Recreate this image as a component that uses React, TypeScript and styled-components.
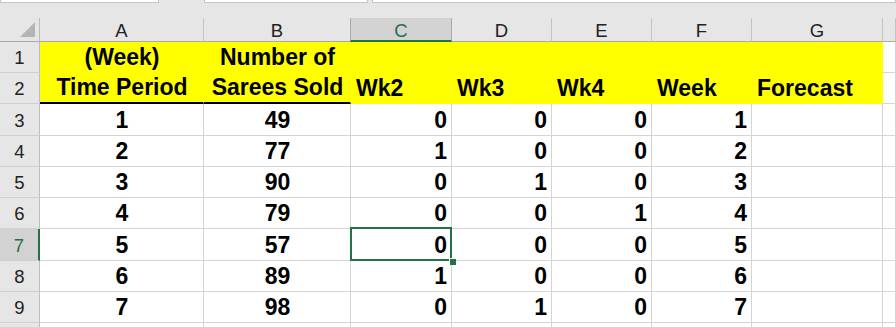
import React from 'react'
import styled, { createGlobalStyle, css } from 'styled-components'

const GlobalStyle = createGlobalStyle`
  html, body {
    margin: 0;
    padding: 0;
    background: #ffffff;
  }
  body {
    font-family: "Liberation Sans", Arial, sans-serif;
  }
`

const GREEN = '#217346'
const GRID = '#d4d4d4'
const YELLOW = '#ffff00'

const Page = styled.div`
  width: 896px;
  height: 327px;
  overflow: hidden;
  background: #e6e6e6;
`

const Toolbar = styled.div`
  height: 18px;
  display: flex;
  align-items: flex-start;
  background: #e6e6e6;
`

const ToolBox = styled.div<{ $w?: number; $ml?: number }>`
  box-sizing: border-box;
  height: 3px;
  background: #ffffff;
  border: 1px solid #c6c6c6;
  border-top: none;
  margin-left: ${(p) => p.$ml || 0}px;
  ${(p) => (p.$w ? `width: ${p.$w}px;` : 'flex: 1;')}
`

const Sheet = styled.div`
  display: grid;
  grid-template-columns: 40px 164px 147px 101px 100px 100px 100px 131px 1fr;
  grid-template-rows: 24px 31px 31px 32px 31px 31px 31px 32px 31px 31px 31px;
  background: #ffffff;
`

const Corner = styled.div`
  position: relative;
  box-sizing: border-box;
  background: #e6e6e6;
  border-right: 1px solid #bdbdbd;
  border-bottom: 1px solid #a9a9a9;

  &::after {
    content: '';
    position: absolute;
    right: 4px;
    bottom: 4px;
    width: 0;
    height: 0;
    border-left: 15px solid transparent;
    border-bottom: 15px solid #b5b5b5;
  }
`

const ColHead = styled.div<{ $active?: boolean }>`
  box-sizing: border-box;
  display: flex;
  align-items: center;
  justify-content: center;
  padding-top: 3px;
  font-size: 18.5px;
  color: #222222;
  background: #e6e6e6;
  border-right: 1px solid #c4c4c4;
  border-bottom: 1px solid #a9a9a9;
  ${(p) =>
    p.$active &&
    css`
      background: #d2d2d2;
      color: ${GREEN};
      border-right-color: #a9a9a9;
      border-left: 1px solid #a9a9a9;
      margin-left: -1px;
      border-bottom: 2px solid ${GREEN};
    `}
`

const RowHead = styled.div<{ $active?: boolean }>`
  box-sizing: border-box;
  display: flex;
  align-items: center;
  justify-content: center;
  padding-top: 2px;
  font-size: 18.5px;
  color: #222222;
  background: #e6e6e6;
  border-right: 1px solid #bdbdbd;
  border-bottom: 1px solid #d0d0d0;
  ${(p) =>
    p.$active &&
    css`
      background: #d2d2d2;
      color: ${GREEN};
      border-right: 2px solid ${GREEN};
    `}
`

type Align = 'left' | 'center' | 'right'

const Cell = styled.div<{ $align: Align; $fill?: boolean; $rule?: boolean; $selected?: boolean }>`
  position: relative;
  box-sizing: border-box;
  display: flex;
  align-items: flex-end;
  justify-content: ${(p) => (p.$align === 'left' ? 'flex-start' : p.$align === 'right' ? 'flex-end' : 'center')};
  padding: 0 4px 2px 5px;
  font-size: 23px;
  font-weight: 700;
  line-height: 26px;
  color: #000000;
  white-space: nowrap;
  border-right: 1px solid ${GRID};
  border-bottom: 1px solid ${GRID};
  ${(p) =>
    p.$fill &&
    css`
      background: ${YELLOW};
      border-right-color: ${YELLOW};
      border-bottom-color: ${YELLOW};
    `}
  ${(p) =>
    p.$rule &&
    css`
      border-bottom: 2px solid #000000;
    `}
  ${(p) =>
    p.$selected &&
    css`
      z-index: 2;
      &::before {
        content: '';
        position: absolute;
        left: -1px;
        top: -2px;
        right: -1px;
        bottom: -1px;
        border: 2px solid ${GREEN};
        pointer-events: none;
      }
      &::after {
        content: '';
        position: absolute;
        right: -5px;
        bottom: -5px;
        width: 6px;
        height: 6px;
        background: ${GREEN};
        border: 1px solid #ffffff;
        border-right: none;
        border-bottom: none;
      }
    `}
`

const cols = ['A', 'B', 'C', 'D', 'E', 'F', 'G', 'H']

const header: string[][] = [
  ['(Week)', 'Number of', '', '', '', '', ''],
  ['Time Period', 'Sarees Sold', 'Wk2', 'Wk3', 'Wk4', 'Week', 'Forecast'],
]

const data: number[][] = [
  [1, 49, 0, 0, 0, 1],
  [2, 77, 1, 0, 0, 2],
  [3, 90, 0, 1, 0, 3],
  [4, 79, 0, 0, 1, 4],
  [5, 57, 0, 0, 0, 5],
  [6, 89, 1, 0, 0, 6],
  [7, 98, 0, 1, 0, 7],
]

const SELECTED_ROW = 7
const SELECTED_COL = 2

export default function App() {
  const rows: React.ReactNode[] = []

  header.forEach((r, i) => {
    const rowNo = i + 1
    rows.push(<RowHead key={`h${rowNo}`}>{rowNo}</RowHead>)
    cols.forEach((_, c) => {
      const inFill = c < 7
      rows.push(
        <Cell
          key={`${rowNo}-${c}`}
          $align={c < 2 ? 'center' : 'left'}
          $fill={inFill}
          $rule={rowNo === 2 && c < 2}
        >
          {inFill ? r[c] : ''}
        </Cell>,
      )
    })
  })

  data.forEach((r, i) => {
    const rowNo = i + 3
    rows.push(
      <RowHead key={`h${rowNo}`} $active={rowNo === SELECTED_ROW}>
        {rowNo}
      </RowHead>,
    )
    cols.forEach((_, c) => (
      rows.push(
        <Cell
          key={`${rowNo}-${c}`}
          $align={c < 2 ? 'center' : 'right'}
          $selected={rowNo === SELECTED_ROW && c === SELECTED_COL}
        >
          {c < 6 ? r[c] : ''}
        </Cell>,
      )
    ))
  })

  // row 10 is only a sliver at the bottom edge
  rows.push(<RowHead key="h10" />)
  cols.forEach((_, c) => rows.push(<Cell key={`10-${c}`} $align="left" />))

  return (
    <Page>
      <GlobalStyle />
      <Toolbar>
        <ToolBox $w={159} />
        <ToolBox $w={164} $ml={45} />
        <ToolBox $ml={4} />
      </Toolbar>
      <Sheet>
        <Corner />
        {cols.map((c, i) => (
          <ColHead key={c} $active={i === SELECTED_COL}>
            {i < 7 ? c : ''}
          </ColHead>
        ))}
        {rows}
      </Sheet>
    </Page>
  )
}
